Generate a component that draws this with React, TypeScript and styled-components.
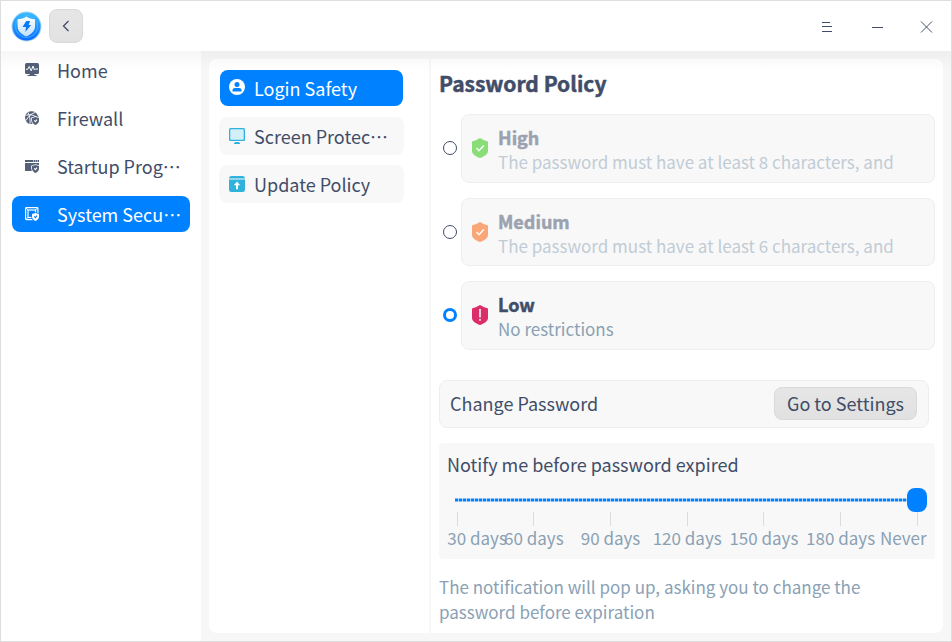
import React from "react";
import styled, { createGlobalStyle, css } from "styled-components";

const ink = "#414d68";
const muted = "#8aa1b4";
const accent = "#0081ff";
const surface = "#f8f8f8";

const GlobalStyle = createGlobalStyle`
  * { box-sizing: border-box; }
  body { margin: 0; font-family: "Noto Sans CJK SC", "Noto Sans", sans-serif; color: ${ink}; }
  svg { display: block; flex: none; }
`;

const Window = styled.div`
  width: 952px;
  height: 642px;
  display: flex;
  flex-direction: column;
  background: #fff;
  border: 1px solid #dedede;
  overflow: hidden;
`;

const TitleBar = styled.header`
  height: 50px;
  flex: none;
  display: flex;
  align-items: center;
  padding: 0 14px 0 10px;
`;

const BackButton = styled.button`
  width: 34px;
  height: 34px;
  margin-left: 7px;
  padding: 0 1px 0 0;
  display: flex;
  align-items: center;
  justify-content: center;
  border: 1px solid #d9d9d9;
  border-radius: 8px;
  background: linear-gradient(#e6e6e6, #e2e2e2);
`;

const WindowControls = styled.div`
  margin-left: auto;
  margin-top: 1px;
  display: flex;
  gap: 30px;
`;

const Body = styled.div`
  position: relative;
  flex: 1;
  display: flex;
  min-height: 0;
  &::after {
    content: "";
    position: absolute;
    inset: 0 0 auto 0;
    height: 20px;
    background: linear-gradient(rgba(0, 0, 0, 0.035), rgba(0, 0, 0, 0));
    pointer-events: none;
  }
`;

const Sidebar = styled.nav`
  width: 200px;
  flex: none;
  display: flex;
  flex-direction: column;
  gap: 12px;
  padding: 1px 11px 0;
`;

const NavItem = styled.a<{ $active?: boolean }>`
  height: 36px;
  display: flex;
  align-items: center;
  gap: 18px;
  padding-left: 13px;
  border-radius: 8px;
  font-size: 18px;
  line-height: 36px;
  white-space: nowrap;
  color: ${(p) => (p.$active ? "#fff" : ink)};
  background: ${(p) => (p.$active ? accent : "transparent")};
  & > svg { margin-top: -1px; }
`;

const Content = styled.main`
  flex: 1;
  padding: 8px;
  background: #f7f7f7;
`;

const Panel = styled.div`
  height: 574px;
  display: flex;
  border-radius: 8px;
  background: #fff;
`;

const SubNav = styled.nav`
  width: 222px;
  flex: none;
  display: flex;
  flex-direction: column;
  gap: 10px;
  padding: 10px 25px 0 10px;
  border-right: 2px solid #f7f7f7;
`;

const SubItem = styled.a<{ $active?: boolean }>`
  height: 38px;
  display: flex;
  align-items: center;
  gap: 9px;
  padding-left: 10px;
  border-radius: 8px;
  font-size: 18px;
  line-height: 38px;
  white-space: nowrap;
  background: ${surface};
  ${(p) =>
    p.$active &&
    css`
      color: #fff;
      background: ${accent};
      background-clip: padding-box;
      border: 1px solid transparent;
      border-radius: 9px;
      padding-left: 9px;
      line-height: 36px;
    `}
  & > svg { margin-top: ${(p) => (p.$active ? -2 : 0)}px; }
`;

const Policy = styled.section`
  flex: 1;
  min-width: 0;
  display: flex;
  flex-direction: column;
  padding: 8px 8px 0;
`;

const Heading = styled.h1`
  margin: 0 0 15px;
  font-size: 21px;
  line-height: 32px;
  font-weight: 700;
  -webkit-text-stroke: 0.5px ${ink};
`;

const Levels = styled.div`
  display: flex;
  flex-direction: column;
  gap: 15px;
`;

const LevelRow = styled.label`
  display: flex;
  align-items: center;
  gap: 4px;
  padding-left: 4px;
`;

const Radio = styled.span<{ $checked?: boolean }>`
  width: 14px;
  height: 14px;
  flex: none;
  margin-bottom: 1px;
  border-radius: 50%;
  border: ${(p) => (p.$checked ? `3.5px solid ${accent}` : `1px solid ${ink}`)};
`;

const LevelCard = styled.div<{ $dim?: boolean; $height: number }>`
  flex: 1;
  height: ${(p) => p.$height}px;
  display: flex;
  align-items: center;
  gap: 10px;
  padding-left: 10px;
  border: 1px solid #eeeeee;
  border-radius: 8px;
  background: ${surface};
  & > * { opacity: ${(p) => (p.$dim ? 0.5 : 1)}; }
  & > svg { opacity: 1; margin-top: -1px; }
`;

const LevelText = styled.div`
  display: flex;
  flex-direction: column;
  padding-top: 2px;
  white-space: nowrap;
`;

const LevelName = styled.strong`
  font-size: 18px;
  line-height: 25px;
  font-weight: 700;
  -webkit-text-stroke: 0.5px ${ink};
`;

const LevelHint = styled.span`
  font-size: 17px;
  line-height: 24px;
  color: ${muted};
`;

const ChangeRow = styled.div`
  width: 490px;
  height: 48px;
  margin-top: 30px;
  display: flex;
  align-items: center;
  justify-content: space-between;
  padding: 0 11px 0 10px;
  border: 1px solid #eeeeee;
  border-radius: 8px;
  background: ${surface};
  font-size: 18px;
  line-height: 26px;
  & > span { margin-bottom: 2px; }
`;

const SettingsButton = styled.button`
  width: 143px;
  height: 33px;
  margin-top: -1px;
  padding: 0;
  border: 1px solid #d9d9d9;
  border-radius: 8px;
  background: linear-gradient(#e6e6e6, #e1e1e1);
  color: ${ink};
  font: 18px/31px "Noto Sans CJK SC", sans-serif;
`;

const Notify = styled.div`
  height: 116px;
  margin-top: 15px;
  padding: 6px 8px 0;
  border-radius: 4px;
  background: ${surface};
`;

const NotifyTitle = styled.div`
  font-size: 18px;
  line-height: 30px;
`;

const Slider = styled.div`
  height: 24px;
  margin-top: 9px;
  display: flex;
  align-items: center;
  padding-left: 8px;
`;

const Track = styled.div`
  flex: 1;
  height: 4px;
  background:
    linear-gradient(rgba(247, 247, 247, 0.5) 0 1px, transparent 1px 3px, rgba(247, 247, 247, 0.5) 3px),
    repeating-linear-gradient(90deg, ${accent} 0 3px, #a9d4fb 3px 4px);
`;

const Thumb = styled.div`
  width: 20px;
  height: 24px;
  border-radius: 8px;
  background: ${accent};
`;

const Scale = styled.div`
  display: flex;
  justify-content: space-between;
  padding: 0 9.2px 0 9.6px;
`;

const Mark = styled.div<{ $shift?: number }>`
  width: 1px;
  display: flex;
  flex-direction: column;
  align-items: center;
  white-space: nowrap;
  font-size: 17px;
  line-height: 25px;
  color: ${muted};
  &::before {
    content: "";
    width: 1px;
    height: 14px;
    background: #dcdcdc;
  }
  & > span {
    margin-top: -1px;
    transform: translateX(${(p) => p.$shift ?? 0}px);
  }
`;

const Note = styled.p`
  width: 450px;
  margin: 15px 0 0;
  font-size: 17px;
  line-height: 25px;
  color: ${muted};
`;

const Logo = () => (
  <svg width="31" height="31" viewBox="0 0 31 31">
    <defs>
      <linearGradient id="disc" x1="0" y1="0" x2="0" y2="1">
        <stop offset="0" stopColor="#35bdff" />
        <stop offset="1" stopColor="#0a6cff" />
      </linearGradient>
      <linearGradient id="plate" x1="0" y1="0" x2="0" y2="1">
        <stop offset="0" stopColor="#ffffff" />
        <stop offset="1" stopColor="#bfe0fb" />
      </linearGradient>
    </defs>
    <circle cx="15.5" cy="15.5" r="15" fill="#a9d3ee" />
    <circle cx="15.5" cy="15.5" r="14" fill="url(#disc)" />
    <circle cx="15.5" cy="15.5" r="11" fill="none" stroke="#55bcff" strokeWidth=".7" />
    <path d="M15.3 5.5c2.8 1.9 5.5 2.500 8.700 2.700v7.300c0 4.700-4.200 8-8.700 10-4.500-2-8.700-5.300-8.700-10V8.200c3.200-.2 5.900-.8 8.700-2.700z" fill="url(#plate)" />
    <path d="M15.3 10H19l-1.300 4h2.500l-5.900 7 .7-5h-3.500z" fill="#0879f2" />
  </svg>
);

const shieldPath = "M10.500 6 14 7.100v2.500c0 2.200-1.600 3.700-3.500 4.400C8.600 13.300 7 11.800 7 9.600V7.100z";

const BadgeShield = ({ halo, fill }: { halo: string; fill: string }) => (
  <>
    <path d={shieldPath} fill={fill} stroke={halo} strokeWidth="1.6" />
    <path d={shieldPath} fill={fill} />
    <path d="m9.200 9.300 1.200 1.300 1.700-1.900" fill="none" stroke={halo} strokeWidth="1.1" />
  </>
);

const HomeIcon = () => (
  <svg width="14" height="14" viewBox="0 0 14 14">
    <rect y="0" width="14" height="11" rx="1.6" fill="#536077" />
    <path d="M1 6.300h1.700L4.200 3.500l2 4.300L8 3l1.500 4 1-1H13" fill="none" stroke="#fff" strokeWidth="1" />
    <path d="M4.500 11h5v1h2v1h-9v-1h2z" fill="#536077" />
  </svg>
);

const FirewallIcon = () => (
  <svg width="14" height="14" viewBox="0 0 14 14">
    <path d="M6.500.2C9.600.2 12 2 13 5H0C1 2 3.400.2 6.500.2zM0 5h13.500v3L9 13H5C2 12.500 0 9.500 0 5z" fill="#536077" />
    <path d="M.3 4.500C4 3 8 3.500 13 7M1 9.500C3 6 6 2.500 10 1.500M5 13C5.500 9 4.500 4 3 1.500" fill="none" stroke="#fff" strokeWidth=".9" />
    <BadgeShield halo="#fff" fill="#536077" />
  </svg>
);

const StartupIcon = () => (
  <svg width="14" height="14" viewBox="0 0 14 14">
    <path d="M0 1h14v2H0zM0 4h14v8H0z" fill="#536077" />
    <path d="M8 2h1M10 2h1M12 2h1" stroke="#fff" strokeWidth="1" />
    <BadgeShield halo="#fff" fill="#536077" />
  </svg>
);

const SystemIcon = () => (
  <svg width="14" height="14" viewBox="0 0 14 14" fill="none">
    <rect x=".6" y=".6" width="12.3" height="12" rx=".8" stroke="#fff" strokeWidth="1.2" />
    <rect x="3" y="3" width="7.5" height="7.5" stroke="#fff" strokeWidth="1.2" />
    <path d="m1 1 2 2M12.500 1l-2 2M1 12.500l2-2" stroke="#fff" />
    <BadgeShield halo={accent} fill="#fff" />
  </svg>
);

const LoginIcon = () => (
  <svg width="16" height="16" viewBox="0 0 16 16">
    <circle cx="8" cy="8" r="8" fill="#fff" />
    <circle cx="8" cy="5.5" r="2.5" fill={accent} />
    <path d="M3.500 12.500V11c0-1.300 1.100-2 2.500-2h4c1.400 0 2.500.7 2.500 2v1.500z" fill={accent} />
  </svg>
);

const ScreenIcon = () => (
  <svg width="16" height="16" viewBox="0 0 16 16">
    <rect width="16" height="13" rx="1.5" fill="#2fb3dc" />
    <rect x="1.3" y="1.3" width="13.4" height="10.4" rx=".6" fill="#d3effa" />
    <path d="M6.500 14h3l1.500 1v1H5v-1z" fill="#2fb3dc" />
  </svg>
);

const UpdateIcon = () => (
  <svg width="16" height="16" viewBox="0 0 16 16" fill="#2fb3dc">
    <path d="M2.500 0h11C15 0 16 1 16 2.500H0C0 1 1 0 2.500 0zM0 3.600h16v10.200A2.200 2.200 0 0 1 13.800 16H2.200A2.200 2.200 0 0 1 0 13.800z" />
    <path d="m8 5.600 3.200 3.700H9v3.900H7V9.300H4.800z" fill="#fff" />
  </svg>
);

const LevelIcon = ({ color, warn }: { color: string; warn?: boolean }) => (
  <svg width="16" height="20" viewBox="0 0 16 20">
    <path d="M8 0c2.500 1.500 5 2.700 8 3.500V13c0 3.500-4 5.500-8 7-4-1.500-8-3.500-8-7V3.500C3 2.700 5.500 1.500 8 0z" fill={color} />
    {warn ? (
      <path d="M8 4v8.500M8 14v1.800" stroke="#fff" strokeWidth="1.5" />
    ) : (
      <path d="m4.500 10 2.500 2.700L11.800 7.500" fill="none" stroke="#fff" strokeWidth="1.4" />
    )}
  </svg>
);

const nav = [
  { label: "Home", icon: <HomeIcon /> },
  { label: "Firewall", icon: <FirewallIcon /> },
  { label: "Startup Prog…", icon: <StartupIcon /> },
  { label: "System Secu…", icon: <SystemIcon />, active: true },
];

const subNav = [
  { label: "Login Safety", icon: <LoginIcon />, active: true },
  { label: "Screen Protec…", icon: <ScreenIcon /> },
  { label: "Update Policy", icon: <UpdateIcon /> },
];

const levels = [
  { name: "High", hint: "The password must have at least 8 characters, and", color: "#8ade79", height: 69, dim: true },
  { name: "Medium", hint: "The password must have at least 6 characters, and", color: "#faa777", height: 68, dim: true },
  { name: "Low", hint: "No restrictions", color: "#da2d6a", height: 69, dim: false },
];

const marks = [
  { label: "30 days", shift: 20 },
  { label: "60 days" },
  { label: "90 days" },
  { label: "120 days" },
  { label: "150 days" },
  { label: "180 days" },
  { label: "Never", shift: -14 },
];

// The zh-CN language tag selects the full-width, vertically centred ellipsis.
const Label = ({ text }: { text: string }) => <span lang="zh-CN">{text}</span>;

export default function App() {
  return (
    <>
      <GlobalStyle />
      <Window>
        <TitleBar>
          <Logo />
          <BackButton aria-label="Back">
            <svg width="8" height="12" viewBox="0 0 8 12" fill="none" stroke={ink} strokeWidth="1.3">
              <path d="M6.500 1 1.500 6l5 5" />
            </svg>
          </BackButton>
          <WindowControls>
            <svg width="20" height="12" viewBox="0 0 20 12" stroke={ink}>
              <path d="M5 1.500h8M5 5.500h10M5 10.500h10" />
            </svg>
            <svg width="20" height="12" viewBox="0 0 20 12" stroke={ink}>
              <path d="M5 6.500h11" />
            </svg>
            <svg width="20" height="12" viewBox="0 0 20 12" stroke={ink}>
              <path d="m4 .5 11 11M15 .5l-11 11" />
            </svg>
          </WindowControls>
        </TitleBar>
        <Body>
          <Sidebar>
            {nav.map((n) => (
              <NavItem key={n.label} $active={n.active}>
                {n.icon}
                <Label text={n.label} />
              </NavItem>
            ))}
          </Sidebar>
          <Content>
            <Panel>
              <SubNav>
                {subNav.map((n) => (
                  <SubItem key={n.label} $active={n.active}>
                    {n.icon}
                    <Label text={n.label} />
                  </SubItem>
                ))}
              </SubNav>
              <Policy>
                <Heading>Password Policy</Heading>
                <Levels>
                  {levels.map((l) => (
                    <LevelRow key={l.name}>
                      <Radio $checked={!l.dim} />
                      <LevelCard $dim={l.dim} $height={l.height}>
                        <LevelIcon color={l.color} warn={!l.dim} />
                        <LevelText>
                          <LevelName>{l.name}</LevelName>
                          <LevelHint>{l.hint}</LevelHint>
                        </LevelText>
                      </LevelCard>
                    </LevelRow>
                  ))}
                </Levels>
                <ChangeRow>
                  <span>Change Password</span>
                  <SettingsButton>Go to Settings</SettingsButton>
                </ChangeRow>
                <Notify>
                  <NotifyTitle>Notify me before password expired</NotifyTitle>
                  <Slider>
                    <Track />
                    <Thumb />
                  </Slider>
                  <Scale>
                    {marks.map((m) => (
                      <Mark key={m.label} $shift={m.shift}>
                        <span>{m.label}</span>
                      </Mark>
                    ))}
                  </Scale>
                </Notify>
                <Note>The notification will pop up, asking you to change the password before expiration</Note>
              </Policy>
            </Panel>
          </Content>
        </Body>
      </Window>
    </>
  );
}
